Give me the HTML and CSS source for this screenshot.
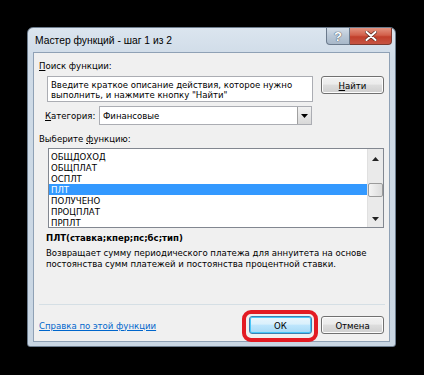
FILE: index.html
```html
<!DOCTYPE html>
<html lang="ru">
<head>
  <meta charset="utf-8" />
  <title>Мастер функций - шаг 1 из 2</title>
  <link rel="stylesheet" href="styles.css">
</head>
<body>

  <div class="window">
    <div class="titlebar">
      <span class="title">Мастер функций - шаг 1 из 2</span>
      <div class="caption-buttons">
        <span class="cap-help">?</span>
        <span class="cap-close">
          <svg width="12" height="10" viewBox="0 0 12 10"><path d="M1.5 1 L10.5 9 M10.5 1 L1.5 9" stroke="#5a2a22" stroke-width="3.4" stroke-linecap="round"/><path d="M1.5 1 L10.5 9 M10.5 1 L1.5 9" stroke="#fff" stroke-width="2" stroke-linecap="round"/></svg>
        </span>
      </div>
    </div>

    <div class="client">
      <div class="label"><u>П</u>оиск функции:</div>

      <div class="search-row">
        <div class="searchbox">Введите краткое описание действия, которое нужно выполнить, и нажмите кнопку "Найти"</div>
        <button class="btn"><u>Н</u>айти</button>
      </div>

      <div class="category-row">
        <span class="cat-label"><u>К</u>атегория:</span>
        <div class="combo">
          <span class="combo-text">Финансовые</span>
          <span class="combo-btn"><svg width="7" height="4" viewBox="0 0 7 4"><path d="M0 0 H7 L3.5 4 Z" fill="#000"/></svg></span>
        </div>
      </div>

      <div class="label label-func">Выберите <u>ф</u>ункцию:</div>

      <div class="listbox">
        <ul class="items">
          <li>ОБЩДОХОД</li>
          <li>ОБЩПЛАТ</li>
          <li>ОСПЛТ</li>
          <li class="selected">ПЛТ</li>
          <li>ПОЛУЧЕНО</li>
          <li>ПРОЦПЛАТ</li>
          <li>ПРПЛТ</li>
        </ul>
        <div class="scrollbar">
          <svg class="arrow-up" width="7" height="4" viewBox="0 0 7 4"><path d="M0 4 H7 L3.5 0 Z" fill="#222"/></svg>
          <div class="thumb"></div>
          <svg class="arrow-down" width="7" height="4" viewBox="0 0 7 4"><path d="M0 0 H7 L3.5 4 Z" fill="#222"/></svg>
        </div>
      </div>

      <div class="signature">ПЛТ(ставка;кпер;пс;бс;тип)</div>
      <div class="description">Возвращает сумму периодического платежа для аннуитета на основе постоянства сумм платежей и постоянства процентной ставки.</div>

      <div class="separator"></div>

      <div class="footer">
        <a class="help-link" href="#">Справка по этой функции</a>
        <div class="buttons">
          <span class="ring"><button class="btn btn-default">ОК</button></span>
          <button class="btn">Отмена</button>
        </div>
      </div>
    </div>
  </div>

</body>
</html>
```

FILE: styles.css
```css
body {
  margin: 0;
  background: #000;
  font-family: "DejaVu Sans Condensed", "DejaVu Sans", sans-serif;
  font-stretch: condensed;
  font-size: 9.5px;
  color: #000;
}

.window {
  margin: 27px 0 0 27px;
  width: 369px;
  height: 320px;
  box-sizing: border-box;
  border: 1px solid #6d7d8e;
  border-radius: 6px 6px 3px 3px;
  background: linear-gradient(#dbe5ef, #cfdbe7 30px, #c9d6e3);
  padding: 0 5px 5px 5px;
}

.titlebar {
  height: 24px;
  display: flex;
  align-items: flex-start;
  justify-content: space-between;
}

.title {
  font-family: "Liberation Sans", Arial, sans-serif;
  font-stretch: normal;
  font-size: 10.3px;
  margin: 7px 0 0 2px;
  color: #000;
}

.caption-buttons {
  display: flex;
  margin-right: -2px;
}

.cap-help,
.cap-close {
  height: 17px;
  display: flex;
  align-items: center;
  justify-content: center;
  box-sizing: border-box;
  border: 1px solid #6b7a8c;
  border-top: none;
}

.cap-help {
  width: 24px;
  border-radius: 0 0 0 4px;
  background: linear-gradient(#d3dde8, #b9c7d6 50%, #a8b8c9);
  color: #fff;
  font-family: "Liberation Sans", Arial, sans-serif;
  font-size: 13px;
  font-weight: bold;
  text-shadow: 0 0 1px #3d4b5a, 0 0 1px #3d4b5a;
}

.cap-close {
  width: 42px;
  border-color: #7a3a30;
  border-left: none;
  border-radius: 0 0 4px 0;
  background: linear-gradient(#e4937f, #d2604b 45%, #c13f2b 55%, #c65443);
}

.client {
  height: 290px;
  box-sizing: border-box;
  border: 1px solid #8fa1b5;
  background: #f0f0f0;
  padding: 6px 5px 0 5px;
}

.label {
  height: 13px;
  line-height: 13px;
}

.search-row {
  display: flex;
  align-items: flex-start;
  margin-top: 4px;
}

.searchbox {
  margin-left: 8px;
  width: 266px;
  height: 26px;
  box-sizing: border-box;
  border: 1px solid #abadb3;
  background: #fff;
  padding: 3px 3px 0 3px;
  line-height: 10px;
}

.btn {
  font-family: "DejaVu Sans Condensed", "DejaVu Sans", sans-serif;
  font-stretch: condensed;
  font-size: 9.5px;
  width: 63px;
  height: 18px;
  padding: 0;
  border: 1px solid #707070;
  border-radius: 3px;
  background: linear-gradient(#f2f2f2, #ebebeb 45%, #dddddd 50%, #cfcfcf);
  color: #000;
  box-shadow: inset 0 0 0 1px #fcfcfc;
}

.search-row .btn {
  margin-left: 8px;
}

.category-row {
  display: flex;
  align-items: center;
  margin-top: 4px;
  height: 19px;
}

.cat-label {
  margin-left: 6px;
  width: 54px;
}

.combo {
  width: 213px;
  height: 19px;
  box-sizing: border-box;
  border: 1px solid #abadb3;
  background: #fff;
  display: flex;
  align-items: center;
}

.combo-text {
  flex: 1;
  padding-left: 3px;
}

.combo-btn {
  width: 14px;
  height: 17px;
  box-sizing: border-box;
  border-left: 1px solid #a0a0a0;
  background: linear-gradient(#f2f2f2, #d8d8d8);
  display: flex;
  align-items: center;
  justify-content: center;
}

.label-func {
  margin-top: 7px;
}

.listbox {
  margin: 3px 0 0 9px;
  width: 336px;
  height: 80px;
  box-sizing: border-box;
  border: 1px solid #828790;
  background: #fff;
  display: flex;
  overflow: hidden;
}

.items {
  flex: 1;
  list-style: none;
  margin: 0;
  padding: 2px 0 0 0;
}

.items li {
  height: 11px;
  line-height: 11px;
  padding-left: 2px;
}

.items li.selected {
  background: #3399ff;
  color: #fff;
}

.scrollbar {
  width: 15px;
  background: #eaeaea;
  border-left: 1px solid #e0e0e0;
  display: flex;
  flex-direction: column;
  align-items: center;
}

.arrow-up {
  margin-top: 8px;
}

.thumb {
  margin-top: 22px;
  width: 15px;
  height: 14px;
  box-sizing: border-box;
  border: 1px solid #9b9b9b;
  border-radius: 2px;
  background: linear-gradient(90deg, #f4f4f4, #dcdcdc);
}

.arrow-down {
  margin-top: 20px;
}

.signature {
  margin: 3px 0 0 7px;
  font-weight: bold;
  font-size: 9.5px;
  height: 14px;
  line-height: 14px;
}

.description {
  margin: 2px 0 0 7px;
  width: 330px;
  line-height: 11px;
}

.separator {
  margin: 35px 0 0 0;
  width: 346px;
  height: 0;
  border-top: 1px solid #d5dfe5;
}

.footer {
  display: flex;
  justify-content: space-between;
  align-items: center;
  margin-top: 11px;
}

.help-link {
  color: #0066cc;
  text-decoration: underline;
}

.buttons {
  display: flex;
  gap: 9px;
}

.ring {
  position: relative;
  display: flex;
}

.ring::after {
  content: "";
  position: absolute;
  left: -7px;
  right: -6px;
  top: -6px;
  bottom: -8px;
  border: 4px solid #e31b23;
  border-radius: 9px;
}

.btn-default {
  border-color: #3c7fb1;
  background: linear-gradient(#eaf6fd, #d9f0fc 45%, #bee6fd 50%, #a7d9f5);
  box-shadow: inset 0 0 0 1px #48c6f7;
}
```
